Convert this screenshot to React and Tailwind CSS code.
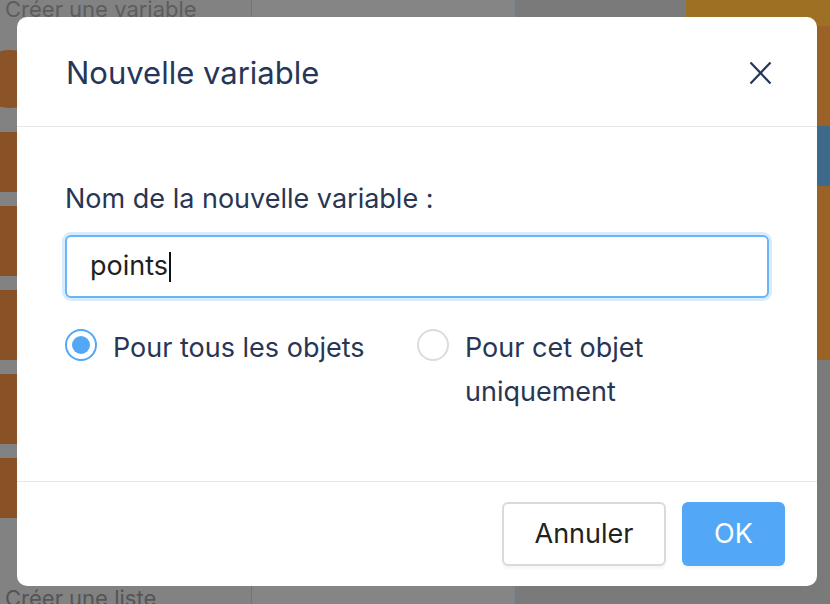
import React, { useState } from "react";

const font = { fontFamily: "Inter, 'Noto Sans', sans-serif" };

function Backdrop() {
    return (
        <div className="absolute inset-0 flex bg-[#7d7d7d] overflow-hidden">
            {/* palette column */}
            <div className="w-[252px] flex flex-col border-r border-[#747474] bg-[#828282]">
                <div className="h-[30px] flex items-end pl-[5px] text-[22px] leading-[22px] text-[#5d5d5d] -mt-[10px]">
                    Créer une variable
                </div>
                <div className="flex flex-col gap-[14px] mt-[20px]">
                    <div className="w-[60px] h-[58px] rounded-full bg-[#8a5428] -ml-[20px] mt-[10px]" />
                    <div className="w-[90px] h-[60px] rounded-[30px] bg-[#885226] -ml-[40px] mt-[10px]" />
                    <div className="w-[90px] h-[70px] rounded-[30px] bg-[#885226] -ml-[40px]" />
                    <div className="w-[90px] h-[70px] rounded-[30px] bg-[#885226] -ml-[40px]" />
                    <div className="w-[90px] h-[70px] rounded-[30px] bg-[#885226] -ml-[40px]" />
                    <div className="w-[90px] h-[60px] rounded-[30px] bg-[#885226] -ml-[40px]" />
                </div>
                <div className="mt-auto h-[18px] pl-[5px] text-[22px] leading-[24px] text-[#555] overflow-hidden">
                    Créer une liste
                </div>
            </div>
            <div className="w-[263px] border-r border-[#7b8290] bg-[#858585]" />
            <div className="flex-1 bg-[#7a7a7a] flex flex-col items-end">
                <div className="w-[144px] h-[360px] bg-[#9a6226] flex flex-col">
                    <div className="h-[26px] bg-[#9e7024]" />
                    <div className="h-[100px]" />
                    <div className="ml-auto w-[20px] h-[60px] rounded-l-[8px] bg-[#3d6a8a]" />
                </div>
            </div>
        </div>
    );
}

function Radio({ checked, onClick, children }) {
    return (
        <label className="flex items-start gap-[16px] cursor-pointer" onClick={onClick}>
            <span
                className={
                    checked
                        ? "mt-[3px] w-[32px] h-[32px] shrink-0 rounded-full border-2 border-[#52a8f7] flex items-center justify-center"
                        : "mt-[3px] w-[32px] h-[32px] shrink-0 rounded-full border-2 border-[#dcdcdc]"
                }
            >
                {checked && <span className="w-[18px] h-[18px] rounded-full bg-[#52a8f7]" />}
            </span>
            <span className="text-[27px] leading-[44px] text-[#283654]">{children}</span>
        </label>
    );
}

export default function App() {
    const [scope, setScope] = useState("all");

    return (
        <div className="relative w-[830px] h-[604px] overflow-hidden" style={font}>
            <Backdrop />

            {/* Modal */}
            <div className="absolute left-[17px] top-[17px] w-[800px] h-[569px] bg-white rounded-[10px] flex flex-col">
                <div className="h-[110px] px-[49px] flex items-center justify-between border-b border-[#e6e6e6]">
                    <h1 className="text-[31px] text-[#263658] pt-[4px]">Nouvelle variable</h1>
                    <svg width="23" height="24" viewBox="0 0 23 24" className="mr-[-4px] mt-[2px]">
                        <path d="M1.5 1.5 L21.5 22.5 M21.5 1.5 L1.5 22.5" stroke="#263658" strokeWidth="2.2" fill="none" />
                    </svg>
                </div>

                <div className="flex-1 px-[48px] pt-[54px]">
                    <div className="text-[27px] leading-[36px] text-[#283654]">Nom de la nouvelle variable :</div>
                    <div className="mt-[18px] h-[63px] rounded-[6px] border-2 border-[#68b5f8] bg-white shadow-[0_0_0_3px_#d9ecfd] flex items-center pl-[23px]">
                        <span className="text-[27px] text-[#1f1f1f]">points</span>
                        <span className="w-[1.5px] h-[30px] bg-[#111] ml-[1px]" />
                    </div>
                    <div className="mt-[28px] grid grid-cols-2">
                        <Radio checked={scope === "all"} onClick={() => setScope("all")}>
                            Pour tous les objets
                        </Radio>
                        <Radio checked={scope === "this"} onClick={() => setScope("this")}>
                            Pour cet objet uniquement
                        </Radio>
                    </div>
                </div>

                <div className="h-[105px] border-t border-[#e6e6e6] flex items-start justify-end gap-[16px] pt-[20px] pr-[32px]">
                    <button className="w-[164px] h-[64px] rounded-[6px] border-2 border-[#dadada] bg-white text-[27px] text-[#222] shadow-[0_3px_3px_rgba(0,0,0,0.04)]">
                        Annuler
                    </button>
                    <button className="w-[103px] h-[64px] rounded-[6px] bg-[#52a8f7] text-[27px] text-white shadow-[0_3px_3px_rgba(0,0,0,0.04)]">
                        OK
                    </button>
                </div>
            </div>
        </div>
    );
}
